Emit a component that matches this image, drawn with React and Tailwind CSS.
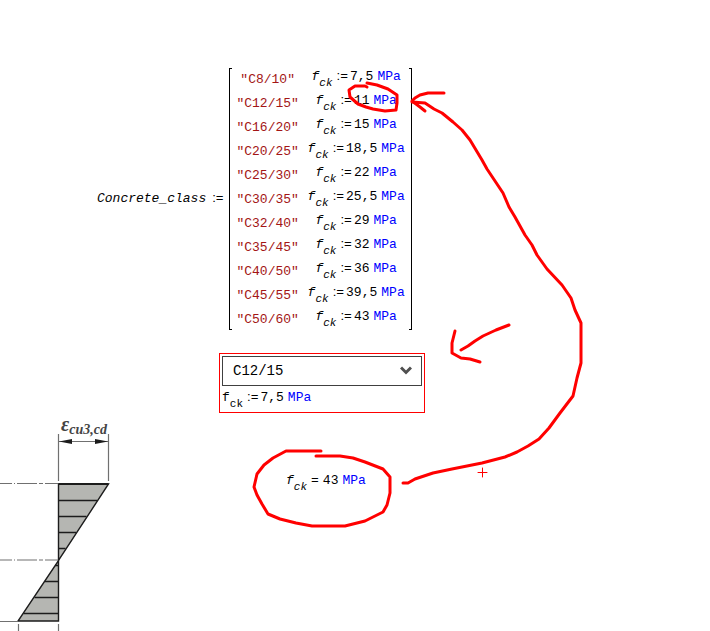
import { useState } from "react";

const STRENGTHS = [
  { name: "C8/10", fck: "7,5" },
  { name: "C12/15", fck: "11" },
  { name: "C16/20", fck: "15" },
  { name: "C20/25", fck: "18,5" },
  { name: "C25/30", fck: "22" },
  { name: "C30/35", fck: "25,5" },
  { name: "C32/40", fck: "29" },
  { name: "C35/45", fck: "32" },
  { name: "C40/50", fck: "36" },
  { name: "C45/55", fck: "39,5" },
  { name: "C50/60", fck: "43" }
];

// freehand strokes drawn over the sheet
const INK = [
  "367,87 365,86 355,86 349,90 350,97 358,104 366,107 373,109 385,111 396,110 397,103 397,95 388,89 377,85 367,83",
  "444,93 428,93 420,95 415,98 412,101 420,107 425,111",
  "412,102 425,103 434,109 442,113 453,122 462,130 470,140 476,150 482,160 487,169 495,181 503,193 509,207 515,217 525,235 532,245 537,255 547,269 562,285 571,298 575,310 581,323 581,363 577,378 573,396 560,413 549,428 539,439 528,446 517,452 505,457 482,463 452,469 433,473 415,479 408,483 403,483",
  "509,325 496,330 483,336 475,341 468,346 461,350",
  "455,331 452,343 452,353 461,358 470,359 480,362",
  "321,451 286,451 273,458 264,465 257,474 254,487 257,495 262,504 268,514 280,519 296,523 312,526 345,526 365,521 383,512 387,505 390,493 390,477 383,469 365,462 353,458 340,456 316,456"
];

function Assign() {
  return (
    <span>
      <span className="font-['Liberation_Sans',sans-serif] leading-[0px]">:</span>=
    </span>
  );
}

function Strength({ value, result = false, upright = false }) {
  return (
    <span className="whitespace-nowrap">
      <span className={upright ? "" : "italic"}>
        f
        <span className="align-[-6px] text-[11px] leading-[0px]">ck</span>
      </span>
      <span className="ml-1">{result ? "=" : <Assign />}</span>
      <span className={result ? "ml-1" : "ml-0.5"}>{value}</span>
      <span className="ml-1 text-[#0000ff]">MPa</span>
    </span>
  );
}

function ClassMatrix() {
  return (
    <section className="flex items-center pl-[97px] pt-[67px]">
      <span className="italic">Concrete_class</span>
      <span className="ml-1.5 mr-[5px]">
        <Assign />
      </span>
      <div className="my-px w-[3px] self-stretch border-y border-l border-black" />
      <table className="border-collapse text-center leading-5">
        <tbody>
          {STRENGTHS.map((row) => (
            <tr key={row.name} className="h-6">
              <td className="w-[72px] p-0 pt-px text-[#a31515]">"{row.name}"</td>
              <td className="w-[105px] p-0 pb-1">
                <Strength value={row.fck} />
              </td>
            </tr>
          ))}
        </tbody>
      </table>
      <div className="my-px w-[3px] self-stretch border-y border-r border-black" />
    </section>
  );
}

function ClassPicker() {
  const [selected, setSelected] = useState("C12/15");

  return (
    <section className="ml-[219px] mt-[22px] h-[60px] w-[206px] border border-[#ff0000] p-0.5">
      <div className="relative">
        <select
          aria-label="Concrete class"
          value={selected}
          onChange={(e) => setSelected(e.target.value)}
          className="block h-[30px] w-full appearance-none rounded-none border border-[#404040] bg-white pl-2.5 text-sm text-black"
        >
          {STRENGTHS.map((row) => (
            <option key={row.name}>{row.name}</option>
          ))}
        </select>
        <svg
          className="pointer-events-none absolute right-2.5 top-2.5"
          width="12"
          height="10"
          viewBox="0 0 12 10"
          fill="none"
          stroke="#505050"
          strokeWidth="3"
        >
          <path d="M1 1.5l5 5 5-5" />
        </svg>
      </div>
      <div className="pt-0.5 leading-5">
        <Strength value="7,5" upright />
      </div>
    </section>
  );
}

function StrainDiagram() {
  return (
    <svg width="130" height="218" viewBox="0 413 130 218" className="shrink-0">
      <g fill="#b5b6b2" stroke="#1c1c1c" strokeWidth="1.4">
        <path d="M58.5 484H108.5L58.5 560.5Z" />
        <path d="M58.5 560.5V621H18Z" />
        <path d="M58.5 500.5H97M58.5 516.5H86.5M58.5 532.5H76M58.5 548.5H65.5M55 565.5H58.5M45 581.5H58.5M34.5 597.5H58.5M23.5 613.5H58.5" />
        <path d="M58.5 484H108.5" strokeWidth="2" />
      </g>
      <g stroke="#707070" strokeWidth="1.2" fill="none">
        <path d="M58.5 434V481M108.5 434V481M58.5 441.5H108.5M0 621.5H18M18.5 624V631M58.5 624V631" />
        <path d="M0 483.5H12M14 483.5H15M17 483.5H37M39 483.5H43M45 483.5H58" />
        <path d="M0 560H12M14 560H15M17 560H37M39 560H43M45 560H58" />
      </g>
      <path d="M59 441.5l13-2.5v5ZM108 441.5l-13-2.5v5Z" fill="#1c1c1c" />
      <text
        x="61"
        y="431"
        fill="#444444"
        className="font-['Liberation_Serif',serif] text-[20px] font-bold italic"
      >
        ε
        <tspan dy="3" className="text-[14px]">
          cu3,cd
        </tspan>
      </text>
    </svg>
  );
}

function Ink() {
  return (
    <svg
      className="pointer-events-none absolute left-0 top-0"
      width="710"
      height="631"
      fill="none"
      stroke="#ff0000"
      strokeLinecap="round"
      strokeLinejoin="round"
    >
      {INK.map((points) => (
        <polyline key={points} points={points} strokeWidth="3" />
      ))}
      {/* insertion cursor */}
      <path d="M478 472.5H487M482.5 468V477" strokeWidth="1" />
    </svg>
  );
}

export default function App() {
  return (
    <main className="relative min-h-screen overflow-hidden bg-white font-['Liberation_Mono',monospace] text-[13px] text-black">
      <ClassMatrix />
      <ClassPicker />
      <section className="flex">
        <StrainDiagram />
        <div className="pl-[156px] pt-[58px] leading-5">
          <Strength value="43" result />
        </div>
      </section>
      <Ink />
    </main>
  );
}
